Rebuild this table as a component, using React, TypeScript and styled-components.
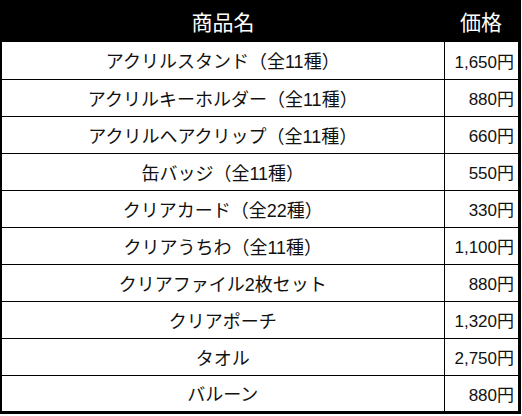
import { createGlobalStyle, styled } from 'styled-components';

const items = [
  { name: 'アクリルスタンド（全11種）', price: '1,650円' },
  { name: 'アクリルキーホルダー（全11種）', price: '880円' },
  { name: 'アクリルヘアクリップ（全11種）', price: '660円' },
  { name: '缶バッジ（全11種）', price: '550円' },
  { name: 'クリアカード（全22種）', price: '330円' },
  { name: 'クリアうちわ（全11種）', price: '1,100円' },
  { name: 'クリアファイル2枚セット', price: '880円' },
  { name: 'クリアポーチ', price: '1,320円' },
  { name: 'タオル', price: '2,750円' },
  { name: 'バルーン', price: '880円' },
];

const GlobalStyle = createGlobalStyle`
  html, body {
    margin: 0;
    padding: 0;
    background: #fff;
  }
  body {
    font-family: 'Liberation Sans', 'Noto Sans CJK JP', sans-serif;
  }
`;

const App: React.FC = () => {
  return (
    <>
      <GlobalStyle />
      <PriceTable>
        <colgroup>
          <col style={{ width: 443 }} />
          <col />
        </colgroup>
        <thead>
          <tr>
            <HeadCell>商品名</HeadCell>
            <HeadCell>価格</HeadCell>
          </tr>
        </thead>
        <tbody>
          {items.map(({ name, price }, i) => (
            <Row key={name} $last={i === items.length - 1}>
              <NameCell>{name}</NameCell>
              <PriceCell>{price}</PriceCell>
            </Row>
          ))}
        </tbody>
      </PriceTable>
    </>
  );
};

const PriceTable = styled.table`
  width: 521px;
  table-layout: fixed;
  border-collapse: collapse;
  border-left: 2px solid #000;
  border-right: 3px solid #000;
  border-bottom: 3px solid #000;
  color: #111;
`;

const HeadCell = styled.th`
  height: 42px;
  padding: 0;
  background: #000;
  color: #fff;
  font-size: 21px;
  font-weight: normal;
  text-align: center;
  vertical-align: middle;
`;

const Row = styled.tr<{ $last?: boolean }>`
  height: 37px;

  td {
    border-bottom: ${({ $last }) => ($last ? '0' : '1px solid #000')};
  }
`;

const NameCell = styled.td`
  padding: 0;
  font-size: 18px;
  text-align: center;
  vertical-align: middle;
  border-right: 1px solid #000;
  white-space: nowrap;
`;

const PriceCell = styled.td`
  padding: 0 4px 0 0;
  font-size: 17px;
  text-align: right;
  vertical-align: middle;
  white-space: nowrap;
`;

export default App;
